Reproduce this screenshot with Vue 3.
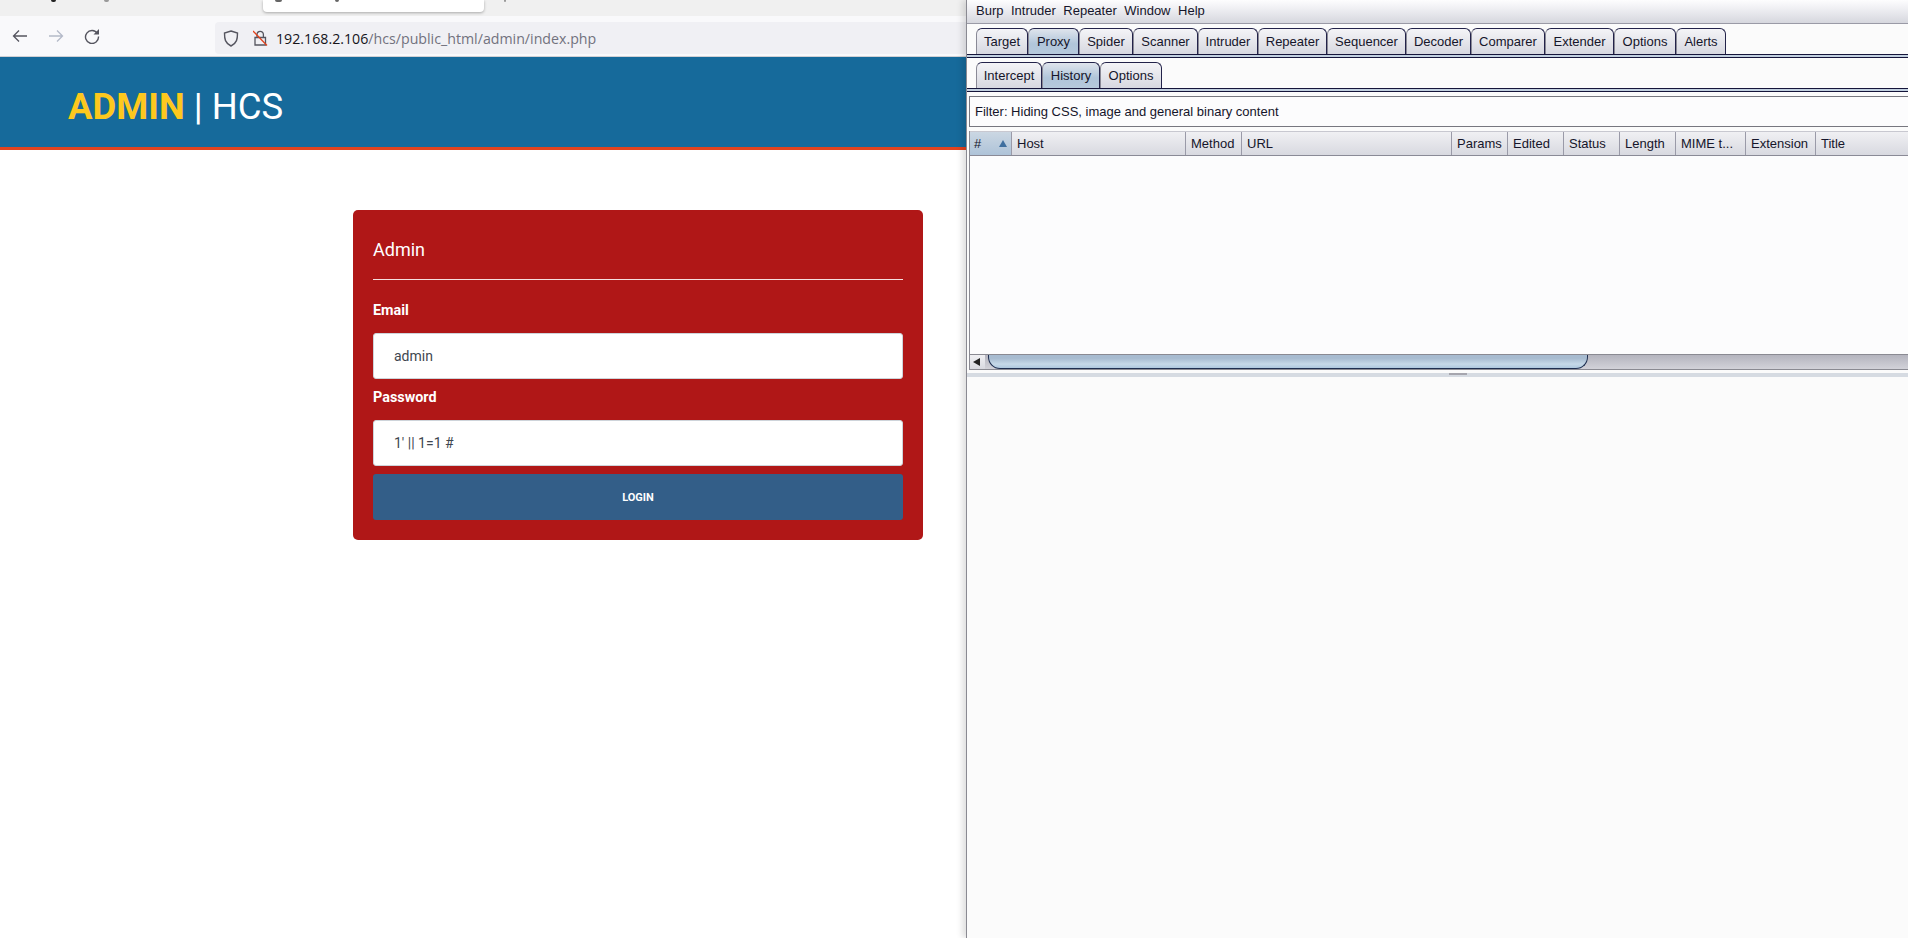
<script setup>
const tabs = [
  { t: 'Target', w: 52 }, { t: 'Proxy', w: 51, on: true }, { t: 'Spider', w: 54 }, { t: 'Scanner', w: 65 },
  { t: 'Intruder', w: 60 }, { t: 'Repeater', w: 69 }, { t: 'Sequencer', w: 79 }, { t: 'Decoder', w: 65 },
  { t: 'Comparer', w: 74 }, { t: 'Extender', w: 69 }, { t: 'Options', w: 62 }, { t: 'Alerts', w: 50 }
]
const subtabs = [{ t: 'Intercept', w: 66 }, { t: 'History', w: 58, on: true }, { t: 'Options', w: 62 }]
const cols = [
  { t: 'Host', w: 174 }, { t: 'Method', w: 56 }, { t: 'URL', w: 210 }, { t: 'Params', w: 56 }, { t: 'Edited', w: 56 },
  { t: 'Status', w: 56 }, { t: 'Length', w: 56 }, { t: 'MIME t...', w: 70 }, { t: 'Extension', w: 70 }, { t: 'Title', w: 92 }
]
const menus = ['Burp', 'Intruder', 'Repeater', 'Window', 'Help']
</script>

<template>
  <div class="screen">
    <section class="browser">
      <div class="strip">
        <span class="bit b1"></span>
        <span class="bit b2"></span>
        <div class="cur-tab"><span class="bit b3"></span><span class="bit b4"></span></div>
        <span class="bit b5"></span>
      </div>
      <div class="toolbar">
        <svg class="nav" width="16" height="16" viewBox="0 0 16 16"><path d="M15 8H1.500M7 2.500 1.500 8 7 13.500" fill="none" stroke="#55555f" stroke-width="1.300"/></svg>
        <svg class="nav n2" width="16" height="16" viewBox="0 0 16 16"><path d="M1 8h13.500M9 2.500 14.500 8 9 13.500" fill="none" stroke="#b4bac8" stroke-width="1.300"/></svg>
        <svg class="nav n3" width="16" height="16" viewBox="0 0 16 16"><path d="M13.500 5.500A6.500 6.500 0 1 0 14.500 8.500" fill="none" stroke="#55555f" stroke-width="1.400"/><path d="M15 1v5.500H9.500z" fill="#55555f"/></svg>
        <div class="urlbar">
          <svg class="shield" width="16" height="17" viewBox="0 0 16 17"><path d="M8 1 14.500 3c0 6 -.5 10 -6.500 13C2 13 1.500 9 1.500 3z" fill="none" stroke="#55555f" stroke-width="1.400"/></svg>
          <svg class="lock" width="15" height="16" viewBox="0 0 15 16"><path d="M4 7V4.500a3.200 3.200 0 0 1 6.400 0V7M2 7.500h10.500V15H2z" fill="none" stroke="#55555f" stroke-width="1.300"/><path d="M0 1l14 14.500" stroke="#e2421c" stroke-width="1.300"/></svg>
          <span class="url"><b>192.168.2.106</b>/hcs/public_html/admin/index.php</span>
        </div>
      </div>
      <header class="site-head">
        <span class="brand"><strong>ADMIN</strong> | HCS</span>
      </header>
      <main class="content">
        <form class="card" @submit.prevent>
          <h4 class="card-title">Admin</h4>
          <div class="rule"></div>
          <label class="lbl first">Email</label>
          <div class="field">admin</div>
          <label class="lbl">Password</label>
          <div class="field">1' || 1=1 #</div>
          <button class="login" type="button">LOGIN</button>
        </form>
      </main>
    </section>

    <section class="burp">
      <div class="menubar">
        <span v-for="m in menus" :key="m">{{ m }}</span>
      </div>
      <div class="tabrow top">
        <div v-for="t in tabs" :key="t.t" class="tab" :class="{ on: t.on }" :style="{ width: t.w + 'px' }">{{ t.t }}</div>
      </div>
      <div class="band"></div>
      <div class="tabrow sub">
        <div v-for="t in subtabs" :key="t.t" class="tab" :class="{ on: t.on }" :style="{ width: t.w + 'px' }">{{ t.t }}</div>
      </div>
      <div class="band"></div>
      <div class="filter">Filter: Hiding CSS, image and general binary content</div>
      <div class="table">
        <div class="thead">
          <div class="th num"># <svg width="8" height="7" viewBox="0 0 8 7"><path d="M4 0 8 7H0z" fill="#3f6f9f"/></svg></div>
          <div v-for="c in cols" :key="c.t" class="th" :style="{ width: c.w + 'px' }">{{ c.t }}</div>
        </div>
        <div class="tbody"></div>
        <div class="hscroll">
          <div class="arrow"><svg width="7" height="8" viewBox="0 0 7 8"><path d="M0 4 7 0v8z" fill="#222"/></svg></div>
          <div class="thumb"></div>
        </div>
      </div>
      <div class="splitter"><span class="grip"></span></div>
      <div class="lower"></div>
    </section>
  </div>
</template>

<style>
html, body { margin: 0; padding: 0; background: #fff; overflow: hidden; }
</style>

<style scoped>
.screen { display: flex; width: 1908px; height: 938px; overflow: hidden; background: #fff; }
.browser { width: 966px; flex: none; display: flex; flex-direction: column; font-family: Roboto, sans-serif; }

.strip { height: 16px; background: #f0f0f0; display: flex; align-items: flex-start; }
.bit { display: block; flex: none; height: 2px; width: 5px; background: #222; border-radius: 0 0 2px 2px; }
.b1 { margin-left: 51px; }
.b2 { margin-left: 48px; background: #999; }
.cur-tab { margin-left: 154px; width: 221px; height: 12px; background: #fff; border-radius: 0 0 4px 4px; box-shadow: 0 1px 3px rgba(0,0,0,.3); display: flex; align-items: flex-start; }
.b3 { margin-left: 12px; width: 7px; background: #666; }
.b4 { margin-left: 53px; width: 4px; background: #666; }
.b5 { margin-left: 20px; width: 2px; background: #999; }

.toolbar { height: 40px; background: #f9f9fb; border-bottom: 1px solid #d0d0d4; display: flex; align-items: center; }
.nav { margin-left: 12px; flex: none; }
.n2 { margin-left: 20px; }
.n3 { margin-left: 20px; }
.urlbar { margin-left: 115px; flex: 1; height: 32px; margin-top: 4px; background: #f0f0f4; border-radius: 4px 0 0 4px; display: flex; align-items: center; }
.shield { margin-left: 8px; }
.lock { margin-left: 14px; }
.url { margin-left: 8px; font: 14.2px "Open Sans", sans-serif; color: #72727e; white-space: nowrap; }
.url b { font-weight: 400; color: #15141a; }

.site-head { height: 81px; padding: 9px 0 0 68px; background: #166a9b; border-bottom: 3px solid #e2431e; display: flex; align-items: center; }
.brand { font-size: 36.5px; color: #fff; font-weight: 400; white-space: nowrap; }
.brand strong { color: #fdc81e; font-weight: 700; }

.content { flex: 1; padding: 60px 0 0 353px; }
.card { width: 570px; height: 330px; box-sizing: border-box; background: #b01717; border-radius: 5px; padding: 20px 20px 0; display: flex; flex-direction: column; }
.card-title { margin: 0; height: 49px; font-size: 18px; line-height: 40px; font-weight: 400; color: #fff; }
.rule { height: 1px; background: #f5dede; flex: none; }
.lbl { height: 41px; line-height: 38px; font-size: 14.4px; font-weight: 700; color: #fff; flex: none; }
.lbl.first { margin-top: 12px; }
.field { height: 46px; flex: none; box-sizing: border-box; background: #fff; border: 1px solid #ced4da; border-radius: 3px; padding: 0 20px; line-height: 44px; font-size: 14px; color: #3f4750; }
.login { margin-top: 8px; height: 46px; border: 0; border-radius: 3px; background: #335e88; color: #fff; font: 700 11px Roboto, sans-serif; padding: 0; flex: none; }

.burp { flex: 1; min-width: 0; display: flex; flex-direction: column; background: #fbfbfb; border-left: 1px solid #8a8a92; box-shadow: -4px 0 6px rgba(0,0,0,.12); font: 13px "Liberation Sans", sans-serif; color: #15152a; position: relative; z-index: 1; }

.menubar { height: 24px; flex: none; box-sizing: border-box; padding: 0 0 2px 9px; display: flex; gap: 7.500px; align-items: center; background: linear-gradient(#fdfdfe, #f4f4f7 25%, #d6d7de); border-bottom: 1px solid #9a9aa6; }
.tabrow { display: flex; padding-left: 9px; flex: none; background: #fbfbfb; padding-top: 4px; }
.tab { box-sizing: border-box; height: 26px; line-height: 26px; text-align: center; background: linear-gradient(#f4f4f7, #d7d8e0); border: 1px solid #23234a; border-bottom: 0; border-left-color: #8a8a96; border-radius: 6px 6px 0 0; white-space: nowrap; }
.tab.on { background: linear-gradient(#dfe4ec, #b0c5da 60%, #b6c9dc); }
.band { height: 2px; flex: none; background: #c2d0e0; border-top: 1px solid #15153a; border-bottom: 1px solid #15153a; }
.filter { margin: 4px 0 0 2px; height: 31px; flex: none; box-sizing: border-box; border: 1px solid #77777f; border-right: 0; padding-left: 5px; line-height: 29px; background: #fcfcfd; white-space: nowrap; }

.table { margin: 4px 0 0 2px; height: 239px; flex: none; border-left: 1px solid #8a8a92; display: flex; flex-direction: column; }
.thead { height: 25px; flex: none; box-sizing: border-box; display: flex; background: linear-gradient(#f0f0f3, #d8d9e0); border-top: 1px solid #c8c8d0; border-bottom: 1px solid #8a8a96; }
.th { box-sizing: border-box; border-right: 1px solid #9a9aa8; padding-left: 5px; line-height: 23px; white-space: nowrap; flex: none; }
.th:last-child { border-right: 0; }
.num { width: 42px; display: flex; justify-content: space-between; align-items: center; padding: 0 4px; background: linear-gradient(#cbd7e3, #aec3d8); }
.tbody { flex: 1; background: #fcfcfd; border-bottom: 1px solid #8a8a92; }
.hscroll { height: 15px; flex: none; display: flex; background: linear-gradient(#b4b4be, #d2d2d9); border-bottom: 1px solid #8a8a92; box-sizing: border-box; }
.arrow { width: 15px; flex: none; background: linear-gradient(#f0f0f3, #d8d9e0); display: flex; align-items: center; padding-left: 3px; box-sizing: border-box; }
.thumb { width: 600px; margin-left: 3px; flex: none; box-sizing: border-box; border: 1px solid #1f2f50; border-top: 0; border-radius: 0 0 12px 12px; background: linear-gradient(#a7bbd0 25%, #c6d9e8 70%, #aec8de); }

.splitter { height: 4px; margin-top: 3px; flex: none; background: #d6dbe2; position: relative; }
.grip { position: absolute; left: 482px; top: 0; width: 18px; height: 2px; background: #a6a6ae; }
.lower { flex: 1; background: #fbfbfb; }
</style>
